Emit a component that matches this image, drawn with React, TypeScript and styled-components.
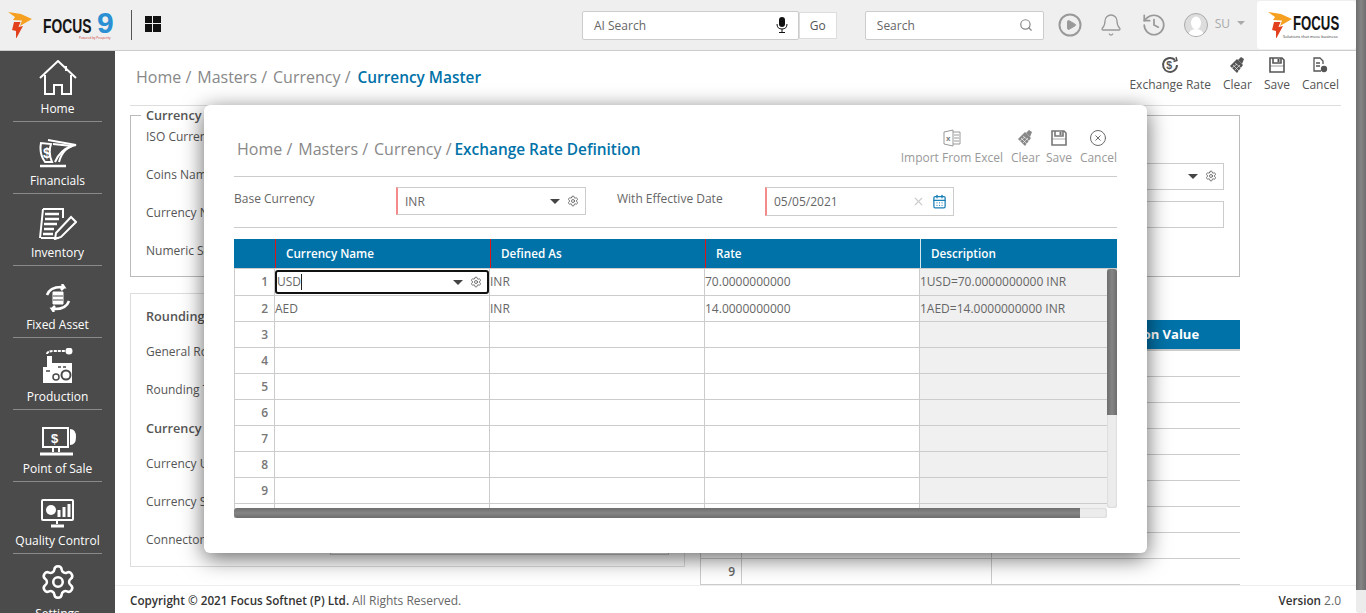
import { ReactElement, ReactNode } from 'react';
import styled, { createGlobalStyle } from 'styled-components';
import { Bell, CalendarDays, CircleX, History, Play, Search, Settings, X } from 'lucide-react';

const Global = createGlobalStyle`
  html, body { margin: 0; padding: 0; height: 100%; overflow: hidden; }
  body { font-family: "Open Sans", "Liberation Sans", sans-serif; font-size: 12px; color: #555; background: #fff; }
  * { box-sizing: border-box; }
`;

const Root = styled.div`
  display: flex;
  width: 1366px;
  height: 613px;
  overflow: hidden;
  position: relative;
`;

const Frame = styled.div`
  flex: 1;
  min-width: 0;
  display: flex;
  flex-direction: column;
`;

const PageScroll = styled.div`
  width: 10px;
  background: #ececec;
  border-radius: 0 0 3px 3px;
  div {
    height: 590px;
    background: linear-gradient(90deg, #6e6e6e, #858585 50%, #6e6e6e);
  }
`;

/* ---------- header ---------- */
const Header = styled.header`
  height: 51px;
  flex: none;
  display: flex;
  align-items: center;
  background: #efefef;
  border-bottom: 1px solid #ccc;
`;

const Brand = styled.div`
  width: 131px;
  flex: none;
  padding-left: 8px;
  display: flex;
  align-items: center;
  position: relative;
`;

const BrandWord = styled.span<{ $w: number; $size: number }>`
  display: inline-block;
  width: ${(p) => p.$w}px;
  font-family: "Liberation Sans", sans-serif;
  font-weight: 700;
  font-size: ${(p) => p.$size}px;
  line-height: 1;
  color: #151515;
  transform: scaleX(0.66);
  transform-origin: left center;
  white-space: nowrap;
`;

const MainWord = styled(BrandWord)`
  margin-left: 11px;
`;

const CardWord = styled(BrandWord)`
  margin-left: 1px;
  margin-top: -4px;
`;

const BrandNine = styled.span`
  font-family: "Liberation Sans", sans-serif;
  font-weight: 700;
  font-size: 30px;
  line-height: 1;
  color: #2b8fd3;
  margin-top: -4px;
`;

const BrandTag = styled.span`
  position: absolute;
  left: 79px;
  bottom: -2px;
  font-size: 3px;
  color: #c33;
  white-space: nowrap;
`;

const HeadDivider = styled.div`
  width: 1px;
  height: 30px;
  background: #555;
`;

const AppsGrid = styled.div`
  margin-left: 13px;
  width: 16px;
  height: 16px;
  display: grid;
  grid-template-columns: 1fr 1fr;
  gap: 1px;
  margin-top: -3px;
  i { background: #111; display: block; }
`;

const SearchBox = styled.div<{ $w: number; $left: number }>`
  width: ${(p) => p.$w}px;
  height: 29px;
  margin-left: ${(p) => p.$left}px;
  display: flex;
  align-items: center;
  justify-content: space-between;
  padding: 0 10px 0 11px;
  background: #fff;
  border: 1px solid #ccc;
  border-radius: 2px;
  color: #666;
  font-size: 12px;
`;

const GoButton = styled.div`
  width: 38px;
  height: 27px;
  display: flex;
  align-items: center;
  justify-content: center;
  background: #fff;
  border: 1px solid #ddd;
  color: #555;
`;

const Tools = styled.div`
  margin-left: 14px;
  display: flex;
  align-items: center;
  color: #999;
`;

const BellIcon = styled(Bell)`
  margin-left: 17px;
`;

const HistoryIcon = styled(History)`
  margin-left: 18px;
`;

const Avatar = styled.div`
  width: 24px;
  height: 24px;
  border-radius: 50%;
  border: 1px solid #aaa;
  background: #ddd;
  margin-left: 17px;
  overflow: hidden;
  display: flex;
`;

const UserName = styled.span`
  margin-left: 7px;
  margin-top: -4px;
  color: #aaa;
  font-size: 12px;
`;

const UserCaret = styled.span`
  margin-left: 7px;
  margin-top: -4px;
  display: flex;
`;

const Caret = styled.i<{ $color?: string; $size?: number }>`
  display: inline-block;
  width: 0;
  height: 0;
  border-left: ${(p) => p.$size ?? 5}px solid transparent;
  border-right: ${(p) => p.$size ?? 5}px solid transparent;
  border-top: ${(p) => p.$size ?? 5}px solid ${(p) => p.$color ?? '#444'};
`;

const LogoCard = styled.div`
  margin-left: 12px;
  width: 99px;
  height: 48px;
  flex: none;
  background: #fff;
  border-radius: 3px;
  display: flex;
  align-items: center;
  padding-left: 11px;
  position: relative;
`;

const CardTag = styled.span`
  position: absolute;
  left: 26px;
  bottom: 10px;
  font-size: 4px;
  color: #333;
  white-space: nowrap;
`;

/* ---------- sidebar ---------- */
const Body = styled.div`
  flex: 1;
  min-height: 0;
  display: flex;
`;

const Sidebar = styled.nav`
  width: 115px;
  flex: none;
  background: #4b4b4b;
  overflow: hidden;
`;

const NavItem = styled.div`
  height: 72px;
  margin: 0 13px;
  border-bottom: 1px solid #8a8a8a;
  display: flex;
  flex-direction: column;
  align-items: center;
  justify-content: flex-end;
  color: #fff;
  font-size: 12px;
  line-height: 16px;
  padding-bottom: 4px;
  white-space: nowrap;
  svg { margin-bottom: 5px; }
  &:first-child { height: 71px; }
  &:last-child { border-bottom: 0; }
`;

/* ---------- page behind the modal ---------- */
const Page = styled.main`
  flex: 1;
  min-width: 0;
  display: flex;
  flex-direction: column;
`;

const PageInner = styled.div`
  flex: 1;
  min-height: 0;
  padding: 0 15px;
`;

const TitleBar = styled.div`
  height: 55px;
  display: flex;
  align-items: flex-start;
  justify-content: space-between;
  border-bottom: 1px solid #ddd;
`;

const Crumbs = styled.div`
  font-size: 16px;
  line-height: 22px;
  color: #888;
  white-space: nowrap;
  padding: 15px 0 0 6px;
  span { margin-right: 6px; }
  b { font-weight: 600; font-size: 15.4px; color: #0072a8; margin-left: 1px; }
`;

const Actions = styled.div<{ $gap: number; $color: string }>`
  display: flex;
  gap: ${(p) => p.$gap}px;
  color: ${(p) => p.$color};
  white-space: nowrap;
`;

const Action = styled.div`
  display: flex;
  flex-direction: column;
  align-items: center;
  font-size: 12px;
  line-height: 16px;
  svg { height: 18px; margin-bottom: 3px; }
`;

const TightAction = styled(Action)`
  margin-left: -2px;
`;

const PageActions = styled(Actions)`
  padding-top: 5px;
  margin-right: 2px;
`;

const Panel = styled.fieldset`
  width: 1110px;
  height: 170px;
  margin: 1px 0 0;
  padding: 0 15px;
  border: 1px solid #bbb;
  min-width: 0;
`;

const PanelLegend = styled.legend`
  padding: 0 5px;
  margin-left: -5px;
  font-size: 12.7px;
  font-weight: 600;
  line-height: 16px;
  color: #555;
`;

const PanelGrid = styled.div`
  display: grid;
  grid-template-columns: 1fr 354px;
  grid-auto-rows: 38px;
  margin-top: -6px;
  align-items: center;
`;

const FieldLabel = styled.span`
  font-size: 12px;
  color: #555;
`;

const LowerRow = styled.div`
  display: flex;
  gap: 15px;
  margin-top: 16px;
  width: 1110px;
`;

const RoundingPanel = styled.section`
  width: 555px;
  height: 274px;
  border: 1px solid #ddd;
  padding: 7px 15px;
  display: flex;
  flex-direction: column;
`;

const RoundRow = styled.div<{ $h: number; $bold?: boolean }>`
  height: ${(p) => p.$h}px;
  flex: none;
  display: flex;
  align-items: center;
  justify-content: space-between;
  font-size: ${(p) => (p.$bold ? 12.7 : 12)}px;
  font-weight: ${(p) => (p.$bold ? 600 : 400)};
`;

const GridSide = styled.section`
  flex: 1;
  padding-top: 27px;
`;

const SideHead = styled.div`
  height: 31px;
  background: #0072a8;
  border-bottom: 2px solid #ccc;
  color: #fff;
  font-size: 13px;
  font-weight: 700;
  line-height: 29px;
  padding-left: 366px;
  white-space: nowrap;
`;

const SideRow = styled.div`
  height: 26px;
  display: grid;
  grid-template-columns: 41px 250px 1fr;
  border-bottom: 1px solid #ccc;
  span {
    border-left: 1px solid #ccc;
    text-align: right;
    padding-right: 6px;
    line-height: 26px;
    font-weight: 600;
    color: #666;
  }
`;

const Footer = styled.footer`
  height: 28px;
  flex: none;
  display: flex;
  align-items: center;
  justify-content: space-between;
  padding: 1px 15px 0;
  border-top: 1px solid #eee;
  font-size: 12px;
  color: #666;
  b { font-weight: 600; font-size: 11.7px; color: #333; }
`;

/* ---------- modal ---------- */
const Modal = styled.div`
  position: absolute;
  left: 204px;
  top: 105px;
  width: 943px;
  height: 448px;
  background: #fff;
  border-radius: 6px;
  box-shadow: 0 5px 22px rgba(0, 0, 0, 0.6);
  padding: 0 30px;
`;

const ModalTitle = styled.div`
  height: 72px;
  display: flex;
  align-items: flex-start;
  justify-content: space-between;
  border-bottom: 1px solid #ccc;
`;

const ModalCrumbs = styled(Crumbs)`
  padding: 33px 0 0 3px;
  b { margin-left: -3px; }
`;

const ModalActions = styled(Actions)`
  padding-top: 24px;
`;

const FilterRow = styled.div`
  height: 51px;
  display: flex;
  align-items: center;
  border-bottom: 1px solid #ccc;
`;

const FilterLabel = styled.span<{ $w: number }>`
  width: ${(p) => p.$w}px;
  flex: none;
  font-size: 12px;
  color: #666;
  margin-top: -8px;
`;

const Field = styled.div<{ $w: number; $required?: boolean; $h?: number }>`
  width: ${(p) => p.$w}px;
  height: ${(p) => p.$h ?? 28}px;
  flex: none;
  display: flex;
  align-items: center;
  padding: 0 6px 0 7px;
  margin-top: ${(p) => (p.$required ? -2 : 0)}px;
  border: 1px solid #ccc;
  border-left: ${(p) => (p.$required ? '2px solid #f58a8a' : '1px solid #ccc')};
  background: #fff;
  font-size: 12px;
  color: #666;
  span { flex: 1; }
`;

const PanelField = styled(Field)`
  margin-top: 4px;
`;

const DateClear = styled(X)`
  margin-right: 7px;
`;

const DropControls = styled.div`
  display: flex;
  align-items: center;
  gap: 7px;
  color: #555;
`;

const FilterGap = styled.div`
  width: 31px;
  flex: none;
`;

const DataGrid = styled.div`
  margin-top: 11px;
  width: 883px;
`;

const COLS = '41px 215px 215px 215px 1fr';

const GridHead = styled.div`
  height: 30px;
  display: grid;
  grid-template-columns: ${COLS};
  background: #0072a8;
  border-bottom: 1px solid #ccc;
`;

const HeadCell = styled.div<{ $edge?: string }>`
  color: #fff;
  font-size: 11.7px;
  font-weight: 600;
  line-height: 29px;
  padding-left: 10px;
  border-left: 1px solid ${(p) => p.$edge ?? 'transparent'};
`;

const GridBody = styled.div`
  height: 239px;
  display: flex;
`;

const Rows = styled.div`
  flex: 1;
  min-width: 0;
  overflow: hidden;
  border-left: 1px solid #ccc;
`;

const Row = styled.div`
  height: 26px;
  display: grid;
  grid-template-columns: 40px 215px 215px 215px 1fr;
  border-bottom: 1px solid #ccc;
  &:first-child { height: 27px; }
`;

const Cell = styled.div<{ $shade?: boolean }>`
  font-size: 12px;
  line-height: 25px;
  color: #666;
  white-space: nowrap;
  border-right: 1px solid #ccc;
  background: ${(p) => (p.$shade ? '#f0f0f0' : '#fff')};
  &:last-child { border-right: 0; }
`;

const NumCell = styled(Cell)`
  text-align: right;
  padding-right: 6px;
  font-weight: 600;
  color: #777;
`;

const EditCell = styled.div`
  margin: 1px 0 0 0;
  height: 24px;
  border: 2px solid #111;
  border-radius: 3px;
  display: flex;
  align-items: center;
  padding: 0 5px 0 0;
  font-size: 12px;
  color: #666;
  em { font-style: normal; border-right: 1px solid #222; height: 16px; line-height: 16px; flex: none; }
  div { margin-left: auto; }
`;

const VBar = styled.div`
  width: 10px;
  flex: none;
  background: #ececec;
  border-radius: 0 0 3px 3px;
  box-shadow: inset 0 0 2px #bbb;
  div {
    height: 146px;
    border-radius: 3px 3px 0 0;
    background: linear-gradient(90deg, #6e6e6e, #858585 50%, #6e6e6e);
  }
`;

const HBar = styled.div`
  width: 873px;
  height: 10px;
  background: #ececec;
  border-radius: 0 3px 3px 0;
  box-shadow: inset 0 0 2px #bbb;
  div {
    width: 846px;
    height: 10px;
    border-radius: 3px 0 0 3px;
    background: linear-gradient(#6e6e6e, #858585 50%, #6e6e6e);
  }
`;

/* ---------- drawn icons ---------- */
const LogoMark = ({ size }: { size: number }): ReactElement => (
  <svg width={size} height={size * 1.12} viewBox="0 0 24 27">
    <path d="M0 0 L13 2 L24 7 L12 14 L14 8.5 L5 8 L7 5 Z" fill="#f5a020" />
    <path d="M6 10 L12.5 10 L10.5 15 L15 14 L8 27 L8 19 L4 18 Z" fill="#e2401d" />
  </svg>
);

const HomeIcon = (): ReactElement => (
  <svg width="38" height="36" viewBox="0 0 38 36" fill="none" stroke="#fff" strokeWidth="2">
    <path d="M1 18 L19 1 L37 18" />
    <path d="M27 6 V11" />
    <path d="M6 15 V34 H15 V25 H23 V34 H32 V15" />
  </svg>
);

const FinanceIcon = (): ReactElement => (
  <svg width="38" height="30" viewBox="0 0 38 30" fill="none" stroke="#fff" strokeWidth="2">
    <path d="M2 5 Q0 16 6 24 H13 Q9 15 12 6 Z" />
    <path d="M9 2 L37 7 Q24 9 20 24" />
    <path d="M14 6 L33 8 Q21 12 16 24" />
    <path d="M1 28 H27" strokeWidth="2.5" />
    <text x="4" y="20" fontSize="14" fontWeight="700" fill="#fff" stroke="none" fontFamily="Liberation Sans">$</text>
  </svg>
);

const InventoryIcon = (): ReactElement => (
  <svg width="38" height="32" viewBox="0 0 38 32" fill="none" stroke="#fff" strokeWidth="2">
    <path d="M4 1 H24 V10 M2 30 H20 M4 1 L1 30" />
    <path d="M6 6 H20 M6 11 H20 M5 16 H18 M5 21 H15 M4 26 H14" strokeWidth="2.5" />
    <path d="M17 25 L32 9 L37 14 L22 29 L16 31 Z" />
  </svg>
);

const AssetIcon = (): ReactElement => (
  <svg width="26" height="28" viewBox="0 0 26 28" fill="none" stroke="#fff" strokeWidth="2.5">
    <path d="M2 11 Q5 2 19 3 L17 0 M19 3 L16 6" />
    <path d="M24 17 Q21 26 7 25 L9 28 M7 25 L10 22" />
    <path d="M8 8 H18 V20 H8 Z" fill="#fff" strokeWidth="1" />
    <path d="M8 12 H18 M8 16 H18" stroke="#4b4b4b" strokeWidth="1" />
  </svg>
);

const ProductionIcon = (): ReactElement => (
  <svg width="32" height="36" viewBox="0 0 32 36" fill="#fff">
    <path d="M5 6 Q5 3 12 3 H24" fill="none" stroke="#fff" strokeWidth="2" strokeDasharray="3 1" />
    <circle cx="27" cy="3" r="3.5" />
    <path d="M5 8 H10 V15 H30 V35 H1 V19 H5 Z" />
    <circle cx="24" cy="27" r="4.5" fill="none" stroke="#4b4b4b" strokeWidth="2" />
    <circle cx="14" cy="29" r="3" fill="none" stroke="#4b4b4b" strokeWidth="1.5" />
    <path d="M16 19 H19 M21 19 H24 M4 23 H8" stroke="#4b4b4b" strokeWidth="1.5" />
  </svg>
);

const PosIcon = (): ReactElement => (
  <svg width="38" height="29" viewBox="0 0 38 29" fill="none" stroke="#fff" strokeWidth="2">
    <rect x="4" y="1" width="25" height="19" />
    <path d="M31 2 Q37 2 37 10 Q37 18 31 18 Z" fill="#fff" stroke="none" />
    <path d="M14 21 V25 M20 21 V25" />
    <path d="M1 27 H34" strokeWidth="3" />
    <text x="12" y="16" fontSize="13" fontWeight="700" fill="#fff" stroke="none" fontFamily="Liberation Sans">$</text>
  </svg>
);

const QualityIcon = (): ReactElement => (
  <svg width="34" height="29" viewBox="0 0 34 29" fill="none" stroke="#fff" strokeWidth="2">
    <rect x="1" y="1" width="31" height="20" rx="1" />
    <circle cx="10" cy="11" r="5" fill="#fff" stroke="none" />
    <path d="M18 18 V11 M23 18 V8 M28 18 V5" strokeWidth="3" />
    <path d="M16 21 V25" />
    <path d="M10 27 H23" strokeWidth="3" />
  </svg>
);

const MicIcon = (): ReactElement => (
  <svg width="12" height="16" viewBox="0 0 12 16" fill="#111">
    <rect x="3" y="0" width="6" height="10" rx="3" />
    <path d="M1 7 Q1 12 6 12 Q11 12 11 7" fill="none" stroke="#111" />
    <path d="M6 12 V15 M3 15.5 H9" stroke="#111" />
  </svg>
);

const UserGlyph = (): ReactElement => (
  <svg width="22" height="22" viewBox="0 0 22 22" fill="#fff">
    <ellipse cx="11" cy="9" rx="5" ry="6.5" />
    <path d="M3 22 Q4 15 11 15 Q18 15 19 22 Z" />
  </svg>
);

const PlayCircle = (): ReactElement => (
  <svg width="24" height="24" viewBox="0 0 24 24" fill="none" stroke="#999" strokeWidth="2">
    <circle cx="12" cy="12" r="10.5" />
    <Play x="7" y="6" size={12} fill="#999" stroke="#999" />
  </svg>
);

const ExchangeIcon = (): ReactElement => (
  <svg width="18" height="18" viewBox="0 0 18 18" fill="none" stroke="#555" strokeWidth="2">
    <path d="M14 4 A7 7 0 1 0 16 9" />
    <path d="M12.5 5.5 L16 4.5 L15 1" strokeWidth="1.4" />
    <text x="5.2" y="13" fontSize="10.5" fontWeight="700" fill="#555" stroke="none" fontFamily="Liberation Sans">$</text>
  </svg>
);

const BrushIcon = ({ color }: { color: string }): ReactElement => (
  <svg width="16" height="18" viewBox="0 0 16 18" fill={color}>
    <path d="M1 10 L8 3 L14 9 L8 17 Z" />
    <path d="M9 4 L12 1 L15 3 L13 8 Z" />
    <path d="M4 9 L10 15 M6 7 L12 12 M3 12 L8 8 M6 14 L11 9" stroke="#fff" strokeWidth="0.6" />
  </svg>
);

const FloppyIcon = ({ color }: { color: string }): ReactElement => (
  <svg width="16" height="18" viewBox="0 0 16 18" fill="none" stroke={color} strokeWidth="1.6">
    <path d="M1 2 H13 L15 4 V16 H1 Z" />
    <path d="M4 2 V7 H12 V2" />
    <path d="M9.5 3 V6" strokeWidth="2" />
    <path d="M1 10 H15" strokeWidth="0.6" />
  </svg>
);

const FileGearIcon = (): ReactElement => (
  <svg width="16" height="18" viewBox="0 0 16 18" fill="none" stroke="#555" strokeWidth="1.3">
    <path d="M9 15 H2 V2 H8 L11 5 V8" />
    <path d="M4 7 H8 M4 10 H8" />
    <circle cx="12" cy="13" r="2.5" fill="#555" />
  </svg>
);

const ExcelIcon = (): ReactElement => (
  <svg width="18" height="18" viewBox="0 0 18 18" fill="none" stroke="#999" strokeWidth="1">
    <path d="M1 3 L10 1 V17 L1 15 Z" />
    <path d="M10 3 H17 V15 H10 M11 6 H16 M11 9 H16 M11 12 H16" />
    <text x="3" y="12" fontSize="8" fontWeight="700" fill="#777" stroke="none" fontFamily="Liberation Sans">x</text>
  </svg>
);

/* ---------- data ---------- */
const NAV: { label: string; icon: ReactNode }[] = [
  { label: 'Home', icon: <HomeIcon /> },
  { label: 'Financials', icon: <FinanceIcon /> },
  { label: 'Inventory', icon: <InventoryIcon /> },
  { label: 'Fixed Asset', icon: <AssetIcon /> },
  { label: 'Production', icon: <ProductionIcon /> },
  { label: 'Point of Sale', icon: <PosIcon /> },
  { label: 'Quality Control', icon: <QualityIcon /> },
];

const Dropdown = (): ReactElement => (
  <DropControls>
    <Caret />
    <Settings size={12} strokeWidth={1.6} />
  </DropControls>
);

export default function App(): ReactElement {
  return (
    <Root>
      <Global />
      <Frame>
        <Header>
          <Brand>
            <LogoMark size={24} />
            <MainWord $w={54} $size={21}>FOCUS</MainWord>
            <BrandNine>9</BrandNine>
            <BrandTag>Powered by Prosperity</BrandTag>
          </Brand>
          <HeadDivider />
          <AppsGrid><i /><i /><i /><i /></AppsGrid>
          <SearchBox $w={217} $left={421}>
            AI Search
            <MicIcon />
          </SearchBox>
          <GoButton>Go</GoButton>
          <SearchBox $w={179} $left={28}>
            Search
            <Search size={14} color="#888" />
          </SearchBox>
          <Tools>
            <PlayCircle />
            <BellIcon size={24} strokeWidth={1.3} />
            <HistoryIcon size={26} strokeWidth={1.6} />
            <Avatar><UserGlyph /></Avatar>
            <UserName>SU</UserName>
            <UserCaret><Caret $color="#aaa" $size={4} /></UserCaret>
          </Tools>
          <LogoCard>
            <LogoMark size={24} />
            <CardWord $w={50} $size={20}>FOCUS</CardWord>
            <CardTag>Solutions that move business</CardTag>
          </LogoCard>
        </Header>

        <Body>
          <Sidebar>
            {NAV.map((item) => (
              <NavItem key={item.label}>
                {item.icon}
                {item.label}
              </NavItem>
            ))}
            <NavItem>
              <Settings size={38} strokeWidth={1.6} />
              Settings
            </NavItem>
          </Sidebar>

          <Page>
            <PageInner>
              <TitleBar>
                <Crumbs>
                  <span>Home /</span>
                  <span>Masters /</span>
                  <span>Currency /</span>
                  <b>Currency Master</b>
                </Crumbs>
                <PageActions $gap={12} $color="#555">
                  <Action><ExchangeIcon />Exchange Rate</Action>
                  <Action><BrushIcon color="#555" />Clear</Action>
                  <Action><FloppyIcon color="#555" />Save</Action>
                  <Action><FileGearIcon />Cancel</Action>
                </PageActions>
              </TitleBar>

              <Panel>
                <PanelLegend>Currency</PanelLegend>
                <PanelGrid>
                  <FieldLabel>ISO Currency Code</FieldLabel>
                  <div />
                  <FieldLabel>Coins Name</FieldLabel>
                  <PanelField $w={354} $h={27}><span /><Dropdown /></PanelField>
                  <FieldLabel>Currency Name</FieldLabel>
                  <PanelField $w={354} $h={27} />
                  <FieldLabel>Numeric Separator</FieldLabel>
                </PanelGrid>
              </Panel>

              <LowerRow>
                <RoundingPanel>
                  <RoundRow $h={30} $bold>Rounding</RoundRow>
                  <RoundRow $h={40}>General Rounding</RoundRow>
                  <RoundRow $h={36}>Rounding Type</RoundRow>
                  <RoundRow $h={42} $bold>Currency</RoundRow>
                  <RoundRow $h={28}>Currency Unit</RoundRow>
                  <RoundRow $h={48}>Currency Sub Unit</RoundRow>
                  <RoundRow $h={28}>
                    Connector
                    <PanelField $w={339} $h={27} />
                  </RoundRow>
                </RoundingPanel>

                <GridSide>
                  <SideHead>Denomination Value</SideHead>
                  {[1, 2, 3, 4, 5, 6, 7, 8, 9].map((n) => (
                    <SideRow key={n}>
                      <span>{n}</span>
                      <span />
                      <span />
                    </SideRow>
                  ))}
                </GridSide>
              </LowerRow>
            </PageInner>

            <Footer>
              <div><b>Copyright © 2021 Focus Softnet (P) Ltd.</b> All Rights Reserved.</div>
              <div><b>Version</b> 2.0</div>
            </Footer>
          </Page>
        </Body>
      </Frame>
      <PageScroll><div /></PageScroll>

      <Modal>
        <ModalTitle>
          <ModalCrumbs>
            <span>Home /</span>
            <span>Masters /</span>
            <span>Currency /</span>
            <b>Exchange Rate Definition</b>
          </ModalCrumbs>
          <ModalActions $gap={8} $color="#999">
            <Action><ExcelIcon />Import From Excel</Action>
            <Action><BrushIcon color="#888" />Clear</Action>
            <TightAction><FloppyIcon color="#777" />Save</TightAction>
            <Action><CircleX size={18} strokeWidth={1.3} color="#666" />Cancel</Action>
          </ModalActions>
        </ModalTitle>

        <FilterRow>
          <FilterLabel $w={162}>Base Currency</FilterLabel>
          <Field $w={190} $required><span>INR</span><Dropdown /></Field>
          <FilterGap />
          <FilterLabel $w={148}>With Effective Date</FilterLabel>
          <Field $w={189} $h={29} $required>
            <span>05/05/2021</span>
            <DateClear size={13} color="#ccc" />
            <CalendarDays size={15} color="#1a7fb5" />
          </Field>
        </FilterRow>

        <DataGrid>
          <GridHead>
            <HeadCell />
            <HeadCell $edge="#e01515">Currency Name</HeadCell>
            <HeadCell $edge="#e01515">Defined As</HeadCell>
            <HeadCell $edge="#e01515">Rate</HeadCell>
            <HeadCell $edge="#d8e6ee">Description</HeadCell>
          </GridHead>
          <GridBody>
            <Rows>
              <Row>
                <NumCell>1</NumCell>
                <Cell>
                  <EditCell>
                    <em>USD</em>
                    <Dropdown />
                  </EditCell>
                </Cell>
                <Cell>INR</Cell>
                <Cell>70.0000000000</Cell>
                <Cell $shade>1USD=70.0000000000 INR</Cell>
              </Row>
              <Row>
                <NumCell>2</NumCell>
                <Cell>AED</Cell>
                <Cell>INR</Cell>
                <Cell>14.0000000000</Cell>
                <Cell $shade>1AED=14.0000000000 INR</Cell>
              </Row>
              {[3, 4, 5, 6, 7, 8, 9, 0].map((n) => (
                <Row key={n}>
                  <NumCell>{n || ''}</NumCell>
                  <Cell />
                  <Cell />
                  <Cell />
                  <Cell $shade />
                </Row>
              ))}
            </Rows>
            <VBar><div /></VBar>
          </GridBody>
          <HBar><div /></HBar>
        </DataGrid>
      </Modal>
    </Root>
  );
}
